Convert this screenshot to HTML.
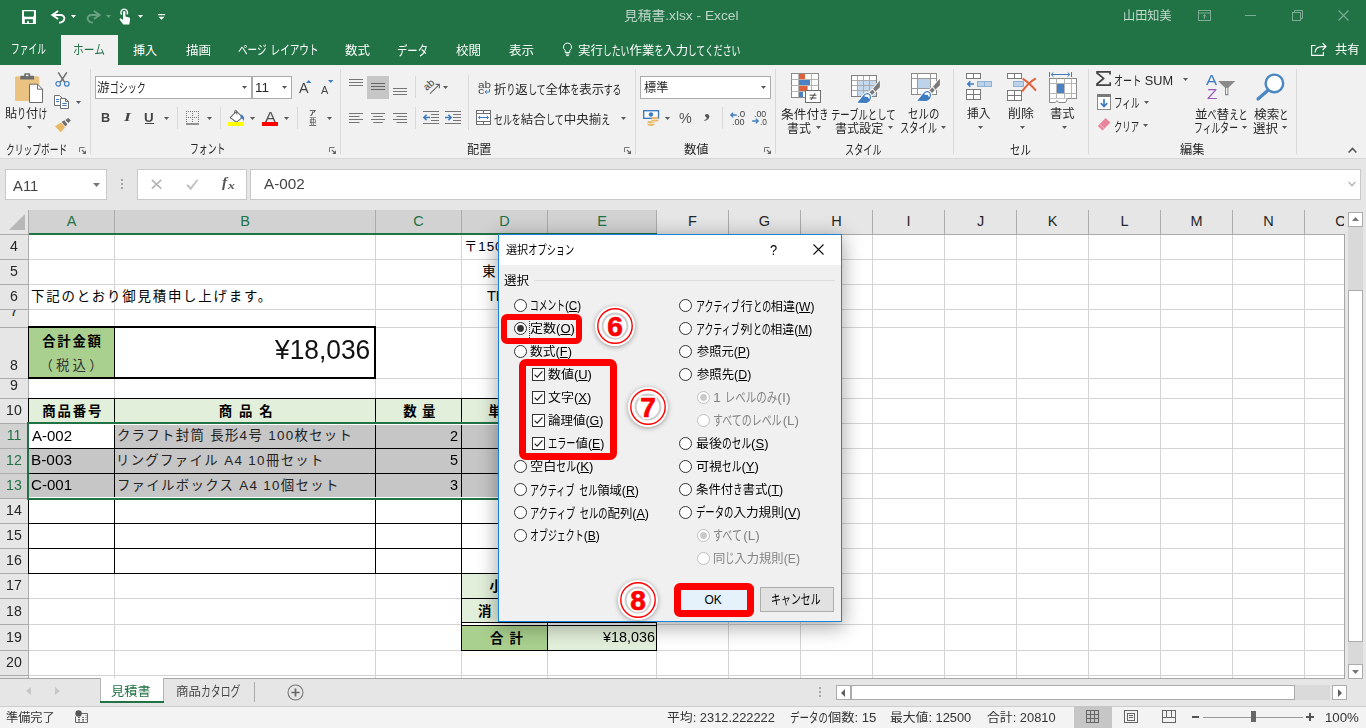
<!DOCTYPE html>
<html lang="ja"><head><meta charset="utf-8"><title>見積書.xlsx - Excel</title>
<style>

html,body{margin:0;padding:0}
body{width:1366px;height:728px;position:relative;overflow:hidden;background:#e6e6e6;font-family:"Liberation Sans","Noto Sans CJK JP",sans-serif;font-size:12px;color:#262626}
.a{position:absolute;box-sizing:border-box}
.t{position:absolute;white-space:nowrap;line-height:20px;height:20px;transform-origin:0 50%}
.t u{text-decoration:underline;text-underline-offset:1px}
svg{overflow:visible}

</style></head>
<body>
<div class="a" style="left:0px;top:0px;width:1366px;height:65px;background:#217346;"></div>
<svg class="a" style="left:22px;top:9.9px;" width="14" height="14" viewBox="0 0 14 14"><rect width="14" height="14" rx=".6" fill="#fff"/><path d="M2 1.2H11.9V6L11.1 6.8H2.8L2 6Z" fill="#217346"/><rect x="2.8" y="9.2" width="8.1" height="3.8" fill="#217346"/><rect x="5" y="11.2" width="2" height="1.8" fill="#fff"/></svg>
<svg class="a" style="left:50.8px;top:10px;" width="15" height="14" viewBox="0 0 15 14"><path d="M7.1 1L1.3 5L7.1 9" fill="none" stroke="#fff" stroke-width="1.9" stroke-linejoin="miter"/><path d="M1.8 5H9.4C14.8 5 15 11.8 8.2 12.8" fill="none" stroke="#fff" stroke-width="1.9"/></svg>
<svg class="a" style="left:71.0px;top:15.0px;" width="5" height="3" viewBox="0 0 5 3"><path d="M0 0H5L2.5 3Z" fill="#fff" opacity="1"/></svg>
<svg class="a" style="left:85.6px;top:10px;" width="15" height="14" viewBox="0 0 15 14"><g opacity=".33" transform="translate(15,0) scale(-1,1)"><path d="M7.1 1L1.3 5L7.1 9" fill="none" stroke="#fff" stroke-width="1.9" stroke-linejoin="miter"/><path d="M1.8 5H9.4C14.8 5 15 11.8 8.2 12.8" fill="none" stroke="#fff" stroke-width="1.9"/></g></svg>
<svg class="a" style="left:106.0px;top:15.0px;" width="5" height="3" viewBox="0 0 5 3"><path d="M0 0H5L2.5 3Z" fill="#fff" opacity="0.33"/></svg>
<svg class="a" style="left:118px;top:8px;" width="13" height="17" viewBox="0 0 13 17"><path d="M6.2 1.1A3.4 3.4 0 0 0 3.6 6.6" fill="none" stroke="#fff" stroke-width="1.4"/><path d="M6.2 1.1A3.4 3.4 0 0 1 8.9 6.4" fill="none" stroke="#fff" stroke-width="1.4"/><path d="M5 3.5Q6.2 2.4 7.4 3.5V8.6L11.2 9.6Q12.3 10 12.1 11.2L11.3 16.5H5.3L1.6 11.6Q1.3 10.4 2.5 10.3L5 12Z" fill="#fff"/></svg>
<svg class="a" style="left:138.0px;top:15.0px;" width="5" height="3" viewBox="0 0 5 3"><path d="M0 0H5L2.5 3Z" fill="#fff" opacity="1"/></svg>
<svg class="a" style="left:158px;top:14px;" width="7" height="6" viewBox="0 0 7 6"><rect x="0" y="0" width="7" height="1.2" fill="#fff"/><path d="M0.5 2.8H6.5L3.5 5.8Z" fill="#fff"/></svg>
<span class="t" style="left:624.24px;top:6.00px;font-size:13px;color:#bdd5c8;transform:scaleX(1.057);">見積書.xlsx  -  Excel</span>
<span class="t" style="left:1122.99px;top:6.00px;font-size:12px;color:#c5dbcf;transform:scaleX(1.011);">山田知美</span>
<svg class="a" style="left:1198px;top:10px;" width="13" height="11" viewBox="0 0 13 11"><rect x=".5" y=".5" width="12" height="10" fill="none" stroke="#7dad94"/><path d="M.5 3H12.5" stroke="#7dad94"/><path d="M6.5 8.8V4.8M4.6 6.6L6.5 4.8L8.4 6.6" fill="none" stroke="#7dad94"/></svg>
<svg class="a" style="left:1245px;top:15px;" width="11" height="1" viewBox="0 0 11 1"><rect width="11" height="1" fill="#7dad94"/></svg>
<svg class="a" style="left:1292px;top:10px;" width="11" height="11" viewBox="0 0 11 11"><path d="M2.5 2.5V.5H10.5V8.5H8.5" fill="none" stroke="#7dad94"/><rect x=".5" y="2.5" width="8" height="8" fill="none" stroke="#7dad94"/></svg>
<svg class="a" style="left:1338px;top:10px;" width="11" height="11" viewBox="0 0 11 11"><path d="M.5.5L10.5 10.5M10.5.5L.5 10.5" stroke="#7dad94" stroke-width="1.1"/></svg>
<div class="a" style="left:61px;top:35px;width:57px;height:30px;background:#f1f1f1;"></div>
<span class="t" style="left:10.98px;top:39.00px;font-size:12px;color:#fff;transform:scaleX(1.015);"><span style="display:inline-block;width:34.32px;font-size:13px;vertical-align:baseline"><span style="display:inline-block;transform:scaleX(0.66);transform-origin:0 50%">ファイル</span></span></span>
<span class="t" style="left:133.00px;top:41.00px;font-size:12px;color:#fff;transform:scaleX(1.000);">挿入</span>
<span class="t" style="left:186.00px;top:41.00px;font-size:12px;color:#fff;transform:scaleX(1.043);">描画</span>
<span class="t" style="left:237.88px;top:40.00px;font-size:12px;color:#fff;transform:scaleX(1.121);"><span style="display:inline-block;width:25.74px;font-size:13px;vertical-align:baseline"><span style="display:inline-block;transform:scaleX(0.66);transform-origin:0 50%">ページ</span></span> <span style="display:inline-block;width:42.9px;font-size:13px;vertical-align:baseline"><span style="display:inline-block;transform:scaleX(0.66);transform-origin:0 50%">レイアウト</span></span></span>
<span class="t" style="left:344.96px;top:41.00px;font-size:12px;color:#fff;transform:scaleX(1.043);">数式</span>
<span class="t" style="left:397.29px;top:41.00px;font-size:12px;color:#fff;transform:scaleX(1.208);"><span style="display:inline-block;width:25.74px;font-size:13px;vertical-align:baseline"><span style="display:inline-block;transform:scaleX(0.66);transform-origin:0 50%">データ</span></span></span>
<span class="t" style="left:456.00px;top:41.00px;font-size:12px;color:#fff;transform:scaleX(1.043);">校閲</span>
<span class="t" style="left:508.50px;top:41.00px;font-size:12px;color:#fff;transform:scaleX(1.043);">表示</span>
<span class="t" style="left:577.96px;top:41.00px;font-size:12px;color:#fff;transform:scaleX(1.035);">実行<span style="display:inline-block;width:25.74px;font-size:13px;vertical-align:baseline"><span style="display:inline-block;transform:scaleX(0.66);transform-origin:0 50%">したい</span></span>作業<span style="display:inline-block;width:8.58px;font-size:13px;vertical-align:baseline"><span style="display:inline-block;transform:scaleX(0.66);transform-origin:0 50%">を</span></span>入力<span style="display:inline-block;width:51.48px;font-size:13px;vertical-align:baseline"><span style="display:inline-block;transform:scaleX(0.66);transform-origin:0 50%">してください</span></span></span>
<span class="t" style="left:72.75px;top:40.00px;font-size:12px;color:#217346;transform:scaleX(1.250);"><span style="display:inline-block;width:25.74px;font-size:13px;vertical-align:baseline"><span style="display:inline-block;transform:scaleX(0.66);transform-origin:0 50%">ホーム</span></span></span>
<svg class="a" style="left:562px;top:42px;" width="11" height="15" viewBox="0 0 11 15"><path d="M5.5 1A4 4 0 0 0 3.2 8.3V10.4H7.8V8.3A4 4 0 0 0 5.5 1Z" fill="none" stroke="#fff" stroke-width="1"/><path d="M3.6 12H7.4M4.2 13.6H6.8" stroke="#fff" stroke-width="1"/></svg>
<svg class="a" style="left:1311px;top:42px;" width="16" height="14" viewBox="0 0 16 14"><path d="M4.5 3.5H.6V13.4H12.4V10" fill="none" stroke="#fff" stroke-width="1.1"/><path d="M4 10.5C4.5 6.6 7.5 4.6 11 4.6H14.6M11.6 1.2L15 4.6L11.6 8" fill="none" stroke="#fff" stroke-width="1.1"/></svg>
<span class="t" style="left:1334.50px;top:40.00px;font-size:12px;color:#fff;transform:scaleX(1.022);">共有</span>
<div class="a" style="left:0px;top:65px;width:1366px;height:93px;background:#f1f1f1;"></div>
<div class="a" style="left:0px;top:158px;width:1366px;height:1px;background:#d8d8d8;"></div>
<div class="a" style="left:90px;top:69px;width:1px;height:85px;background:#d9d9d9;"></div>
<div class="a" style="left:340px;top:69px;width:1px;height:85px;background:#d9d9d9;"></div>
<div class="a" style="left:635px;top:69px;width:1px;height:85px;background:#d9d9d9;"></div>
<div class="a" style="left:775px;top:69px;width:1px;height:85px;background:#d9d9d9;"></div>
<div class="a" style="left:953px;top:69px;width:1px;height:85px;background:#d9d9d9;"></div>
<div class="a" style="left:1088px;top:69px;width:1px;height:85px;background:#d9d9d9;"></div>
<div class="a" style="left:1296px;top:69px;width:1px;height:85px;background:#d9d9d9;"></div>
<div class="a" style="left:177px;top:107px;width:1px;height:22px;background:#d9d9d9;"></div>
<div class="a" style="left:220px;top:107px;width:1px;height:22px;background:#d9d9d9;"></div>
<div class="a" style="left:297px;top:107px;width:1px;height:22px;background:#d9d9d9;"></div>
<div class="a" style="left:415px;top:76px;width:1px;height:22px;background:#d9d9d9;"></div>
<div class="a" style="left:415px;top:107px;width:1px;height:22px;background:#d9d9d9;"></div>
<div class="a" style="left:468px;top:75px;width:1px;height:55px;background:#d9d9d9;"></div>
<div class="a" style="left:722px;top:107px;width:1px;height:22px;background:#d9d9d9;"></div>
<svg class="a" style="left:15px;top:73px;" width="28" height="30" viewBox="0 0 28 30"><rect x="0" y="3.2" width="24.2" height="24.8" rx="1.5" fill="#eac282"/><path d="M5.3 6.6V3.6Q5.3 2.7 6.2 2.7H9.2V1.2Q9.2.2 10.2.2H14.2Q15.2.2 15.2 1.2V2.7H18.2Q19.1 2.7 19.1 3.6V6.6Z" fill="#6d6d6d"/><rect x="11" y="1.6" width="2.4" height="1.6" fill="#f1f1f1"/><path d="M14.5 11.2H22.5L27.5 16.2V29.5H14.5Z" fill="#fff" stroke="#6d6d6d" stroke-width="1"/><path d="M22.5 11.2V16.2H27.5" fill="none" stroke="#6d6d6d" stroke-width="1"/></svg>
<span class="t" style="left:5.28px;top:104.00px;font-size:12px;color:#262626;transform:scaleX(1.018);">貼<span style="display:inline-block;width:8.58px;font-size:13px;vertical-align:baseline"><span style="display:inline-block;transform:scaleX(0.66);transform-origin:0 50%">り</span></span>付<span style="display:inline-block;width:8.58px;font-size:13px;vertical-align:baseline"><span style="display:inline-block;transform:scaleX(0.66);transform-origin:0 50%">け</span></span></span>
<svg class="a" style="left:26.9px;top:125.9px;" width="5" height="3" viewBox="0 0 5 3"><path d="M0 0H5L2.5 3Z" fill="#5a5a5a"/></svg>
<svg class="a" style="left:54.5px;top:71.5px;" width="15" height="15" viewBox="0 0 15 15"><path d="M3.2 0.3L9.6 10.2M11.8 0.3L5.4 10.2" stroke="#6d6d6d" stroke-width="1.5" fill="none"/><circle cx="3.2" cy="11.8" r="2.3" fill="none" stroke="#3e7cc1" stroke-width="1.2"/><circle cx="11.8" cy="11.8" r="2.3" fill="none" stroke="#3e7cc1" stroke-width="1.2"/></svg>
<svg class="a" style="left:54px;top:95px;" width="15" height="14" viewBox="0 0 15 14"><path d="M.5.5H5.5L8 3V10.5H.5Z" fill="#fff" stroke="#6d6d6d"/><path d="M6.5 3.5H11.5L14.5 6.5V13.5H6.5Z" fill="#fff" stroke="#6d6d6d"/><path d="M11.5 3.5V6.5H14.5" fill="none" stroke="#6d6d6d"/><path d="M2 4.5H5M2 6.5H5M8.3 8.5H12.7M8.3 10.5H12.7" stroke="#3e7cc1" stroke-width="1"/></svg>
<svg class="a" style="left:75.8px;top:101.0px;" width="5" height="3" viewBox="0 0 5 3"><path d="M0 0H5L2.5 3Z" fill="#5a5a5a"/></svg>
<svg class="a" style="left:54.5px;top:117.5px;" width="16" height="14.5" viewBox="0 0 16 14.5"><path d="M0 8.2L6.2 4.6L10 9.4L5.6 14.2Z" fill="#eab765"/><path d="M6.6 3.9L9.3 2.3L12.3 6.2L10.4 8.6Z" fill="#6d6d6d"/><path d="M10.4 1.9L13.4 0L15.9 2.5L13.3 5Z" fill="#6d6d6d"/></svg>
<span class="t" style="left:6.18px;top:140.00px;font-size:12px;color:#262626;transform:scaleX(1.019);"><span style="display:inline-block;width:60.06px;font-size:13px;vertical-align:baseline"><span style="display:inline-block;transform:scaleX(0.66);transform-origin:0 50%">クリップボード</span></span></span>
<svg class="a" style="left:79px;top:147px;" width="7" height="7" viewBox="0 0 7 7"><path d="M.5 5V.5H5.5" fill="none" stroke="#777" stroke-width="1"/><path d="M2.8 2.8L5.5 5.5" fill="none" stroke="#666" stroke-width="1.1"/><path d="M7 3.2V7H3.2Z" fill="#666"/></svg>
<div class="a" style="left:95px;top:76px;width:157px;height:23px;background:#fff;border:1px solid #ababab;"></div>
<div class="a" style="left:252px;top:76px;width:40px;height:23px;background:#fff;border:1px solid #ababab;"></div>
<span class="t" style="left:96.55px;top:78.00px;font-size:12px;color:#262626;transform:scaleX(1.055);">游<span style="display:inline-block;width:34.32px;font-size:13px;vertical-align:baseline"><span style="display:inline-block;transform:scaleX(0.66);transform-origin:0 50%">ゴシック</span></span></span>
<svg class="a" style="left:242.0px;top:86.0px;" width="5" height="3" viewBox="0 0 5 3"><path d="M0 0H5L2.5 3Z" fill="#5a5a5a"/></svg>
<span class="t" style="left:254.88px;top:78.00px;font-size:12px;color:#262626;transform:scaleX(1.118);">11</span>
<svg class="a" style="left:281.7px;top:86.0px;" width="5" height="3" viewBox="0 0 5 3"><path d="M0 0H5L2.5 3Z" fill="#5a5a5a"/></svg>
<span class="t" style="left:298.50px;top:78.00px;font-size:14px;color:#444;transform:scaleX(1.022);">A</span>
<svg class="a" style="left:306px;top:80px;" width="5.4" height="3" viewBox="0 0 5.4 3"><path d="M0 3L2.7 0L5.4 3Z" fill="#3e7cc1"/></svg>
<span class="t" style="left:321.00px;top:80.00px;font-size:11.5px;color:#444;transform:scaleX(0.950);">A</span>
<svg class="a" style="left:328px;top:80px;" width="5.4" height="3" viewBox="0 0 5.4 3"><path d="M0 0H5.4L2.7 3Z" fill="#3e7cc1"/></svg>
<span class="t" style="left:100.53px;top:108.00px;font-size:13px;color:#444;transform:scaleX(0.975);font-weight:700;">B</span>
<span class="t" style="left:124.20px;top:107.00px;font-size:13px;color:#444;transform:scaleX(1.360);font-weight:700;font-family:'Liberation Serif',serif;font-style:italic;">I</span>
<span class="t" style="left:144.47px;top:108.00px;font-size:13px;color:#444;transform:scaleX(1.025);font-weight:700;">U</span>
<div class="a" style="left:145px;top:123px;width:9px;height:1px;background:#444;"></div>
<svg class="a" style="left:163.9px;top:116.8px;" width="5" height="3" viewBox="0 0 5 3"><path d="M0 0H5L2.5 3Z" fill="#5a5a5a"/></svg>
<svg class="a" style="left:186px;top:110.5px;" width="13" height="14" viewBox="0 0 13 14"><rect x="0" y="0" width="1" height="1" fill="#777"/><rect x="2" y="0" width="1" height="1" fill="#777"/><rect x="4" y="0" width="1" height="1" fill="#777"/><rect x="6" y="0" width="1" height="1" fill="#777"/><rect x="8" y="0" width="1" height="1" fill="#777"/><rect x="10" y="0" width="1" height="1" fill="#777"/><rect x="12" y="0" width="1" height="1" fill="#777"/><rect x="0" y="6" width="1" height="1" fill="#777"/><rect x="2" y="6" width="1" height="1" fill="#777"/><rect x="4" y="6" width="1" height="1" fill="#777"/><rect x="6" y="6" width="1" height="1" fill="#777"/><rect x="8" y="6" width="1" height="1" fill="#777"/><rect x="10" y="6" width="1" height="1" fill="#777"/><rect x="12" y="6" width="1" height="1" fill="#777"/><rect x="0" y="0" width="1" height="1" fill="#777"/><rect x="0" y="2" width="1" height="1" fill="#777"/><rect x="0" y="4" width="1" height="1" fill="#777"/><rect x="0" y="6" width="1" height="1" fill="#777"/><rect x="0" y="8" width="1" height="1" fill="#777"/><rect x="0" y="10" width="1" height="1" fill="#777"/><rect x="6" y="0" width="1" height="1" fill="#777"/><rect x="6" y="2" width="1" height="1" fill="#777"/><rect x="6" y="4" width="1" height="1" fill="#777"/><rect x="6" y="6" width="1" height="1" fill="#777"/><rect x="6" y="8" width="1" height="1" fill="#777"/><rect x="6" y="10" width="1" height="1" fill="#777"/><rect x="12" y="0" width="1" height="1" fill="#777"/><rect x="12" y="2" width="1" height="1" fill="#777"/><rect x="12" y="4" width="1" height="1" fill="#777"/><rect x="12" y="6" width="1" height="1" fill="#777"/><rect x="12" y="8" width="1" height="1" fill="#777"/><rect x="12" y="10" width="1" height="1" fill="#777"/><rect x="0" y="12.4" width="13" height="1.2" fill="#555"/></svg>
<svg class="a" style="left:207.0px;top:116.8px;" width="5" height="3" viewBox="0 0 5 3"><path d="M0 0H5L2.5 3Z" fill="#5a5a5a"/></svg>
<svg class="a" style="left:229px;top:109.5px;" width="16" height="13" viewBox="0 0 16 13"><path d="M1.2 7.6L7.4 1.4L13.6 7.2L7.6 12.2Z" fill="#fff" stroke="#6a6a6a" stroke-width="1.1" stroke-linejoin="round"/><path d="M5.6 3.4V1.4Q5.6 .3 6.7 .3Q7.8 .3 7.8 1.4V4.6" fill="none" stroke="#6a6a6a" stroke-width="1"/><path d="M12.2 4.4Q16.2 6 14.8 11Q13.8 8.4 11.2 7.2Z" fill="#3e7cc1"/></svg>
<div class="a" style="left:228px;top:122px;width:16px;height:4px;background:#ffff00;"></div>
<svg class="a" style="left:250.0px;top:116.8px;" width="5" height="3" viewBox="0 0 5 3"><path d="M0 0H5L2.5 3Z" fill="#5a5a5a"/></svg>
<span class="t" style="left:265.30px;top:107.00px;font-size:14px;color:#555;transform:scaleX(1.156);">A</span>
<div class="a" style="left:262px;top:122px;width:16px;height:4px;background:#ff0000;"></div>
<svg class="a" style="left:284.0px;top:116.8px;" width="5" height="3" viewBox="0 0 5 3"><path d="M0 0H5L2.5 3Z" fill="#5a5a5a"/></svg>
<span class="t" style="left:308.97px;top:103.00px;font-size:7px;color:#444;transform:scaleX(1.033);font-weight:700;">ア</span>
<span class="t" style="left:308.70px;top:112.00px;font-size:9px;color:#444;transform:scaleX(0.833);">亜</span>
<svg class="a" style="left:327.1px;top:116.8px;" width="5" height="3" viewBox="0 0 5 3"><path d="M0 0H5L2.5 3Z" fill="#5a5a5a"/></svg>
<span class="t" style="left:189.97px;top:139.00px;font-size:12px;color:#262626;transform:scaleX(1.031);"><span style="display:inline-block;width:34.32px;font-size:13px;vertical-align:baseline"><span style="display:inline-block;transform:scaleX(0.66);transform-origin:0 50%">フォント</span></span></span>
<svg class="a" style="left:329px;top:147px;" width="7" height="7" viewBox="0 0 7 7"><path d="M.5 5V.5H5.5" fill="none" stroke="#777" stroke-width="1"/><path d="M2.8 2.8L5.5 5.5" fill="none" stroke="#666" stroke-width="1.1"/><path d="M7 3.2V7H3.2Z" fill="#666"/></svg>
<svg class="a" style="left:349px;top:79px;" width="14" height="7" viewBox="0 0 14 7"><rect x="0" y="0" width="14" height="1" fill="#767676"/><rect x="0" y="3" width="14" height="1" fill="#767676"/><rect x="0" y="6" width="14" height="1" fill="#767676"/></svg>
<div class="a" style="left:367px;top:76px;width:22px;height:23px;background:#c6c6c6;"></div>
<svg class="a" style="left:371px;top:83px;" width="14" height="7" viewBox="0 0 14 7"><rect x="0" y="0" width="14" height="1" fill="#666"/><rect x="0" y="3" width="14" height="1" fill="#666"/><rect x="0" y="6" width="14" height="1" fill="#666"/></svg>
<svg class="a" style="left:393px;top:88px;" width="14" height="7" viewBox="0 0 14 7"><rect x="0" y="0" width="14" height="1" fill="#767676"/><rect x="0" y="3" width="14" height="1" fill="#767676"/><rect x="0" y="6" width="14" height="1" fill="#767676"/></svg>
<svg class="a" style="left:349px;top:113px;" width="14" height="10" viewBox="0 0 14 10"><rect x="0" y="0" width="14" height="1" fill="#767676"/><rect x="0" y="3" width="10.5" height="1" fill="#767676"/><rect x="0" y="6" width="14" height="1" fill="#767676"/><rect x="0" y="9" width="10.5" height="1" fill="#767676"/></svg>
<svg class="a" style="left:371px;top:113px;" width="14" height="10" viewBox="0 0 14 10"><rect x="0" y="0" width="14" height="1" fill="#767676"/><rect x="2.2" y="3" width="9.600000000000001" height="1" fill="#767676"/><rect x="0" y="6" width="14" height="1" fill="#767676"/><rect x="2.2" y="9" width="9.600000000000001" height="1" fill="#767676"/></svg>
<svg class="a" style="left:393px;top:113px;" width="14" height="10" viewBox="0 0 14 10"><rect x="0" y="0" width="14" height="1" fill="#767676"/><rect x="3.5" y="3" width="10.5" height="1" fill="#767676"/><rect x="0" y="6" width="14" height="1" fill="#767676"/><rect x="3.5" y="9" width="10.5" height="1" fill="#767676"/></svg>
<svg class="a" style="left:422.5px;top:79px;" width="17" height="15" viewBox="0 0 17 15"><text x="0" y="0" font-size="10" fill="#444" font-family="Liberation Sans,sans-serif" transform="translate(3.8,12) rotate(-42)">ab</text><path d="M7 14.6L16.2 5.6M12.6 5.4H16.4V9.2" fill="none" stroke="#666" stroke-width="1.1"/></svg>
<svg class="a" style="left:443.0px;top:86.0px;" width="5" height="3" viewBox="0 0 5 3"><path d="M0 0H5L2.5 3Z" fill="#5a5a5a"/></svg>
<svg class="a" style="left:423px;top:111px;" width="16" height="13" viewBox="0 0 16 13"><rect x="0" y="0" width="16" height="1" fill="#767676"/><rect x="0" y="12" width="16" height="1" fill="#767676"/><rect x="8" y="3" width="8" height="1" fill="#767676"/><rect x="8" y="6" width="8" height="1" fill="#767676"/><rect x="8" y="9" width="8" height="1" fill="#767676"/><path d="M7 6.5H1M3.6 3.8L.9 6.5L3.6 9.2" fill="none" stroke="#3e7cc1" stroke-width="1.6"/></svg>
<svg class="a" style="left:445px;top:111px;" width="16" height="13" viewBox="0 0 16 13"><rect x="0" y="0" width="16" height="1" fill="#767676"/><rect x="0" y="12" width="16" height="1" fill="#767676"/><rect x="8" y="3" width="8" height="1" fill="#767676"/><rect x="8" y="6" width="8" height="1" fill="#767676"/><rect x="8" y="9" width="8" height="1" fill="#767676"/><path d="M0 6.5H6M3.4 3.8L6.1 6.5L3.4 9.2" fill="none" stroke="#3e7cc1" stroke-width="1.6"/></svg>
<span class="t" style="left:477.70px;top:75.00px;font-size:9.5px;color:#444;transform:scaleX(1.240);">ab</span>
<span class="t" style="left:478.00px;top:81.00px;font-size:9.5px;color:#444;transform:scaleX(1.350);">c</span>
<svg class="a" style="left:484px;top:88.5px;" width="6" height="5" viewBox="0 0 6 5"><path d="M5.5 0V3H1.2M2.8 1.2L1 3L2.8 4.8" fill="none" stroke="#3e7cc1" stroke-width="1"/></svg>
<span class="t" style="left:494.47px;top:80.00px;font-size:12px;color:#262626;transform:scaleX(1.035);">折<span style="display:inline-block;width:8.58px;font-size:13px;vertical-align:baseline"><span style="display:inline-block;transform:scaleX(0.66);transform-origin:0 50%">り</span></span>返<span style="display:inline-block;width:17.16px;font-size:13px;vertical-align:baseline"><span style="display:inline-block;transform:scaleX(0.66);transform-origin:0 50%">して</span></span>全体<span style="display:inline-block;width:8.58px;font-size:13px;vertical-align:baseline"><span style="display:inline-block;transform:scaleX(0.66);transform-origin:0 50%">を</span></span>表示<span style="display:inline-block;width:17.16px;font-size:13px;vertical-align:baseline"><span style="display:inline-block;transform:scaleX(0.66);transform-origin:0 50%">する</span></span></span>
<svg class="a" style="left:476px;top:110px;" width="15" height="15" viewBox="0 0 15 15"><rect x=".5" y=".5" width="14" height="14" fill="#fff" stroke="#6d6d6d"/><path d="M.5 3.5H14.5M.5 11.5H14.5M7.5 .5V3.5M7.5 11.5V14.5" stroke="#6d6d6d" fill="none"/><path d="M2.6 7.5H12.4M4.2 5.9L2.6 7.5L4.2 9.1M10.8 5.9L12.4 7.5L10.8 9.1" fill="none" stroke="#3e7cc1" stroke-width="1"/></svg>
<span class="t" style="left:494.46px;top:110.00px;font-size:12px;color:#262626;transform:scaleX(1.041);"><span style="display:inline-block;width:25.74px;font-size:13px;vertical-align:baseline"><span style="display:inline-block;transform:scaleX(0.66);transform-origin:0 50%">セルを</span></span>結合<span style="display:inline-block;width:17.16px;font-size:13px;vertical-align:baseline"><span style="display:inline-block;transform:scaleX(0.66);transform-origin:0 50%">して</span></span>中央揃<span style="display:inline-block;width:8.58px;font-size:13px;vertical-align:baseline"><span style="display:inline-block;transform:scaleX(0.66);transform-origin:0 50%">え</span></span></span>
<svg class="a" style="left:620.7px;top:116.8px;" width="5" height="3" viewBox="0 0 5 3"><path d="M0 0H5L2.5 3Z" fill="#5a5a5a"/></svg>
<span class="t" style="left:466.99px;top:140.00px;font-size:12px;color:#262626;transform:scaleX(1.013);">配置</span>
<svg class="a" style="left:623.7px;top:147px;" width="7" height="7" viewBox="0 0 7 7"><path d="M.5 5V.5H5.5" fill="none" stroke="#777" stroke-width="1"/><path d="M2.8 2.8L5.5 5.5" fill="none" stroke="#666" stroke-width="1.1"/><path d="M7 3.2V7H3.2Z" fill="#666"/></svg>
<div class="a" style="left:640px;top:76px;width:131px;height:23px;background:#fff;border:1px solid #ababab;"></div>
<span class="t" style="left:643.70px;top:78.00px;font-size:12px;color:#262626;transform:scaleX(1.013);">標準</span>
<svg class="a" style="left:760.9px;top:86.0px;" width="5" height="3" viewBox="0 0 5 3"><path d="M0 0H5L2.5 3Z" fill="#5a5a5a"/></svg>
<svg class="a" style="left:642.8px;top:110px;" width="17" height="16" viewBox="0 0 17 16"><rect x=".7" y=".7" width="14.8" height="7.6" fill="#fff" stroke="#3e7cc1" stroke-width="1.4"/><circle cx="8" cy="4.5" r="2.2" fill="#3e7cc1"/><ellipse cx="12" cy="8.2" rx="3.6" ry="1.4" fill="#eab765"/><ellipse cx="12" cy="10.6" rx="3.6" ry="1.4" fill="#eab765"/><ellipse cx="8" cy="12.4" rx="3.6" ry="1.4" fill="#eab765"/><ellipse cx="8" cy="14.6" rx="3.6" ry="1.4" fill="#eab765"/><path d="M8.4 9.4H15.6M8.4 11.8H15.6M4.4 13.5H11.6" stroke="#f1f1f1" stroke-width=".7"/></svg>
<svg class="a" style="left:665.0px;top:116.8px;" width="5" height="3" viewBox="0 0 5 3"><path d="M0 0H5L2.5 3Z" fill="#5a5a5a"/></svg>
<span class="t" style="left:679.30px;top:108.00px;font-size:14px;color:#555;transform:scaleX(1.025);">%</span>
<span class="t" style="left:703.80px;top:99.00px;font-size:24px;color:#555;transform:scaleX(1.040);font-weight:700;font-family:'Liberation Serif',serif;">,</span>
<span class="t" style="left:736.55px;top:104.00px;font-size:8.5px;color:#444;transform:scaleX(1.150);">.0</span>
<span class="t" style="left:731.84px;top:112.00px;font-size:8.5px;color:#444;transform:scaleX(1.064);">.00</span>
<svg class="a" style="left:730px;top:111.6px;" width="7" height="6" viewBox="0 0 7 6"><path d="M6.8 3H1M3.2 .6L.8 3L3.2 5.4" fill="none" stroke="#3e7cc1" stroke-width="1.3"/></svg>
<span class="t" style="left:753.96px;top:104.00px;font-size:8.5px;color:#444;transform:scaleX(1.036);">.00</span>
<span class="t" style="left:759.52px;top:112.00px;font-size:8.5px;color:#444;transform:scaleX(0.983);">.0</span>
<svg class="a" style="left:752px;top:118.4px;" width="7" height="6" viewBox="0 0 7 6"><path d="M.2 3H6M3.8 .6L6.2 3L3.8 5.4" fill="none" stroke="#3e7cc1" stroke-width="1.3"/></svg>
<span class="t" style="left:684.27px;top:140.00px;font-size:12px;color:#262626;transform:scaleX(1.030);">数値</span>
<svg class="a" style="left:764px;top:147px;" width="7" height="7" viewBox="0 0 7 7"><path d="M.5 5V.5H5.5" fill="none" stroke="#777" stroke-width="1"/><path d="M2.8 2.8L5.5 5.5" fill="none" stroke="#666" stroke-width="1.1"/><path d="M7 3.2V7H3.2Z" fill="#666"/></svg>
<svg class="a" style="left:791px;top:73px;" width="30" height="30" viewBox="0 0 30 30"><rect x=".5" y=".5" width="27" height="24" fill="#fff" stroke="#8a8a8a"/><path d="M.5 6.5H27.5M.5 12.5H27.5M.5 18.5H27.5M7.5 .5V24.5M20.5 .5V24.5" stroke="#b5b5b5" fill="none"/><rect x="8" y="1" width="6" height="5" fill="#e0623c"/><rect x="8" y="7" width="11" height="5" fill="#4b82c4"/><rect x="8" y="13" width="8.6" height="5" fill="#e0623c"/><rect x="8" y="19" width="4" height="5" fill="#4b82c4"/><rect x="14.5" y="17.5" width="15" height="12" fill="#fff" stroke="#6d6d6d"/><path d="M18.6 22.2H25.4M18.6 25H25.4M24 20.2L20 27" stroke="#444" stroke-width="1" fill="none"/></svg>
<span class="t" style="left:780.94px;top:105.00px;font-size:12px;color:#262626;transform:scaleX(1.060);">条件付<span style="display:inline-block;width:8.58px;font-size:13px;vertical-align:baseline"><span style="display:inline-block;transform:scaleX(0.66);transform-origin:0 50%">き</span></span></span>
<span class="t" style="left:787.21px;top:119.00px;font-size:12px;color:#262626;transform:scaleX(0.991);">書式</span>
<svg class="a" style="left:815.7px;top:125.9px;" width="5" height="3" viewBox="0 0 5 3"><path d="M0 0H5L2.5 3Z" fill="#5a5a5a"/></svg>
<svg class="a" style="left:851px;top:75px;" width="26" height="22" viewBox="0 0 26 22"><rect x=".5" y=".5" width="25" height="21" fill="#fff" stroke="#7f7f7f"/><rect x="7" y="6" width="18" height="15" fill="#c5d9ee"/><path d="M1 5.5H25M1 10.5H25M1 15.5H25M6.5 1V21M12.5 1V21M18.5 1V21" stroke="#ababab" fill="none"/></svg>
<svg class="a" style="left:857px;top:80px;" width="24" height="24" viewBox="0 0 24 24"><path d="M22.9 .6V7.3L18.2 11.8L16 8.8Z" fill="#7a7a7a" stroke="#f6f6f6" stroke-width="2" stroke-linejoin="round" paint-order="stroke"/><path d="M15.5 9.6L17.7 12.3L15 15L12.3 12.5Z" fill="#7a7a7a" stroke="#f6f6f6" stroke-width="2" stroke-linejoin="round" paint-order="stroke"/><path d="M.4 22.8L9.6 22.9Q13.6 21.4 14 17.4Q13.8 13.4 10.4 13Q7.6 13 6.2 15.6Z" fill="#3e7cc1" stroke="#f6f6f6" stroke-width="2" stroke-linejoin="round" paint-order="stroke"/><path d="M7.6 15.6Q9.6 13.6 12.2 14.8Q13.6 17 12.2 19.6L10.8 17L7.2 16.6Z" fill="#fff"/></svg>
<span class="t" style="left:831.21px;top:105.00px;font-size:12px;color:#262626;transform:scaleX(1.090);"><span style="display:inline-block;width:60.06px;font-size:13px;vertical-align:baseline"><span style="display:inline-block;transform:scaleX(0.66);transform-origin:0 50%">テーブルとして</span></span></span>
<span class="t" style="left:835.30px;top:119.00px;font-size:12px;color:#262626;transform:scaleX(1.004);">書式設定</span>
<svg class="a" style="left:887.9px;top:125.9px;" width="5" height="3" viewBox="0 0 5 3"><path d="M0 0H5L2.5 3Z" fill="#5a5a5a"/></svg>
<svg class="a" style="left:911px;top:73px;" width="26" height="22" viewBox="0 0 26 22"><rect x=".5" y=".5" width="25" height="21" fill="#fff" stroke="#8a8a8a"/><rect x="6" y="5" width="14" height="11" fill="#bdd3ea"/><path d="M.5 5.5H25.5M.5 15.5H25.5M6.5 .5V21.5M19.5 .5V21.5" stroke="#9a9a9a" fill="none"/></svg>
<svg class="a" style="left:917.3px;top:78px;" width="24" height="24" viewBox="0 0 24 24"><path d="M22.9 .6V7.3L18.2 11.8L16 8.8Z" fill="#7a7a7a" stroke="#f6f6f6" stroke-width="2" stroke-linejoin="round" paint-order="stroke"/><path d="M15.5 9.6L17.7 12.3L15 15L12.3 12.5Z" fill="#7a7a7a" stroke="#f6f6f6" stroke-width="2" stroke-linejoin="round" paint-order="stroke"/><path d="M.4 22.8L9.6 22.9Q13.6 21.4 14 17.4Q13.8 13.4 10.4 13Q7.6 13 6.2 15.6Z" fill="#3e7cc1" stroke="#f6f6f6" stroke-width="2" stroke-linejoin="round" paint-order="stroke"/><path d="M7.6 15.6Q9.6 13.6 12.2 14.8Q13.6 17 12.2 19.6L10.8 17L7.2 16.6Z" fill="#fff"/></svg>
<span class="t" style="left:908.18px;top:104.00px;font-size:12px;color:#262626;transform:scaleX(1.217);"><span style="display:inline-block;width:25.74px;font-size:13px;vertical-align:baseline"><span style="display:inline-block;transform:scaleX(0.66);transform-origin:0 50%">セルの</span></span></span>
<span class="t" style="left:899.72px;top:118.00px;font-size:12px;color:#262626;transform:scaleX(1.076);"><span style="display:inline-block;width:34.32px;font-size:13px;vertical-align:baseline"><span style="display:inline-block;transform:scaleX(0.66);transform-origin:0 50%">スタイル</span></span></span>
<svg class="a" style="left:940.8px;top:125.9px;" width="5" height="3" viewBox="0 0 5 3"><path d="M0 0H5L2.5 3Z" fill="#5a5a5a"/></svg>
<span class="t" style="left:845.14px;top:140.00px;font-size:12px;color:#262626;transform:scaleX(1.064);"><span style="display:inline-block;width:34.32px;font-size:13px;vertical-align:baseline"><span style="display:inline-block;transform:scaleX(0.66);transform-origin:0 50%">スタイル</span></span></span>
<svg class="a" style="left:966px;top:73px;" width="27" height="28" viewBox="0 0 27 28"><rect x="0.5" y="0.5" width="7" height="5" fill="#fff" stroke="#7a7a7a"/><rect x="7.5" y="0.5" width="7" height="5" fill="#fff" stroke="#7a7a7a"/><rect x="11.5" y="8.5" width="7" height="5" fill="#bdd3ea" stroke="#8fb0d6"/><rect x="18.5" y="8.5" width="7" height="5" fill="#bdd3ea" stroke="#8fb0d6"/><path d="M8 11H2M4.4 8.4L1.8 11L4.4 13.6" fill="none" stroke="#3e7cc1" stroke-width="1.6"/><rect x="0.5" y="16.5" width="7" height="5" fill="#fff" stroke="#7a7a7a"/><rect x="7.5" y="16.5" width="7" height="5" fill="#fff" stroke="#7a7a7a"/><rect x="0.5" y="21.5" width="7" height="5" fill="#fff" stroke="#7a7a7a"/><rect x="7.5" y="21.5" width="7" height="5" fill="#fff" stroke="#7a7a7a"/></svg>
<span class="t" style="left:967.00px;top:104.00px;font-size:12px;color:#262626;transform:scaleX(0.971);">挿入</span>
<svg class="a" style="left:977.9px;top:125.9px;" width="5" height="3" viewBox="0 0 5 3"><path d="M0 0H5L2.5 3Z" fill="#5a5a5a"/></svg>
<svg class="a" style="left:1007px;top:73px;" width="30" height="28" viewBox="0 0 30 28"><rect x="0.5" y="0.5" width="7" height="5" fill="#fff" stroke="#7a7a7a"/><rect x="7.5" y="0.5" width="7" height="5" fill="#fff" stroke="#7a7a7a"/><rect x="6.5" y="8.5" width="10" height="5" fill="#bdd3ea" stroke="#8fb0d6"/><rect x="0.5" y="17.5" width="7" height="5" fill="#fff" stroke="#7a7a7a"/><rect x="7.5" y="17.5" width="7" height="5" fill="#fff" stroke="#7a7a7a"/><rect x="0.5" y="22.5" width="7" height="5" fill="#fff" stroke="#7a7a7a"/><rect x="7.5" y="22.5" width="7" height="5" fill="#fff" stroke="#7a7a7a"/><path d="M15.6 5.6Q22 9.6 29 17.6M28.8 5.4Q21 10 15.2 18.4" fill="none" stroke="#e0623c" stroke-width="2"/></svg>
<span class="t" style="left:1008.22px;top:104.00px;font-size:12px;color:#262626;transform:scaleX(1.077);">削除</span>
<svg class="a" style="left:1019.5px;top:125.9px;" width="5" height="3" viewBox="0 0 5 3"><path d="M0 0H5L2.5 3Z" fill="#5a5a5a"/></svg>
<svg class="a" style="left:1049px;top:72px;" width="29" height="31" viewBox="0 0 29 31"><path d="M.5 0V5M22.5 0V5M2 2.5H21M4.4 .4L2.2 2.5L4.4 4.6M18.6 .4L20.8 2.5L18.6 4.6" fill="none" stroke="#3e7cc1" stroke-width="1"/><rect x=".5" y="6.5" width="27" height="20" fill="#fff" stroke="#8a8a8a"/><path d="M.5 11.5H27.5M.5 21.5H27.5M7.5 6.5V26.5M15.5 6.5V26.5M22.5 6.5V26.5" stroke="#b5b5b5" fill="none"/><rect x="8" y="12" width="7" height="9" fill="#4b82c4"/><path d="M.5 26.5V30.5H6.5L8 28.5L9.5 30.5H16.5L18.5 26.5" fill="#fff" stroke="#8a8a8a"/></svg>
<span class="t" style="left:1050.18px;top:104.00px;font-size:12px;color:#262626;transform:scaleX(1.022);">書式</span>
<svg class="a" style="left:1061.8px;top:125.9px;" width="5" height="3" viewBox="0 0 5 3"><path d="M0 0H5L2.5 3Z" fill="#5a5a5a"/></svg>
<span class="t" style="left:1010.09px;top:140.00px;font-size:12px;color:#262626;transform:scaleX(1.213);"><span style="display:inline-block;width:17.16px;font-size:13px;vertical-align:baseline"><span style="display:inline-block;transform:scaleX(0.66);transform-origin:0 50%">セル</span></span></span>
<svg class="a" style="left:1096px;top:71px;" width="15" height="15" viewBox="0 0 15 15"><path d="M14 3.6V.8H1V2L7.6 7.4L1 13V14.2H14.2V11.2" fill="none" stroke="#444" stroke-width="1.7"/></svg>
<span class="t" style="left:1114.24px;top:71.00px;font-size:12px;color:#262626;transform:scaleX(1.061);"><span style="display:inline-block;width:25.74px;font-size:13px;vertical-align:baseline"><span style="display:inline-block;transform:scaleX(0.66);transform-origin:0 50%">オート</span></span> SUM</span>
<svg class="a" style="left:1182.9px;top:78.3px;" width="5" height="3" viewBox="0 0 5 3"><path d="M0 0H5L2.5 3Z" fill="#5a5a5a"/></svg>
<svg class="a" style="left:1097px;top:94px;" width="14" height="16" viewBox="0 0 14 16"><rect x=".5" y=".5" width="13" height="15" fill="#fff" stroke="#8a8a8a"/><rect x="0" y="0" width="14" height="3" fill="#7a7a7a"/><path d="M7 5V12.4M3.8 9.2L7 12.6L10.2 9.2" fill="none" stroke="#3e7cc1" stroke-width="1.7"/></svg>
<span class="t" style="left:1114.30px;top:93.00px;font-size:12px;color:#262626;transform:scaleX(0.996);"><span style="display:inline-block;width:25.74px;font-size:13px;vertical-align:baseline"><span style="display:inline-block;transform:scaleX(0.66);transform-origin:0 50%">フィル</span></span></span>
<svg class="a" style="left:1144.1px;top:101.0px;" width="5" height="3" viewBox="0 0 5 3"><path d="M0 0H5L2.5 3Z" fill="#5a5a5a"/></svg>
<svg class="a" style="left:1097px;top:118px;" width="14" height="13" viewBox="0 0 14 13"><path d="M8.6 0L13.4 4.4L5.6 12.4L.8 8Z" fill="#e8849b"/><path d="M2.6 6.2L7.4 10.6" stroke="#f6c5cf" stroke-width="1"/></svg>
<span class="t" style="left:1114.33px;top:117.00px;font-size:12px;color:#262626;transform:scaleX(0.975);"><span style="display:inline-block;width:25.74px;font-size:13px;vertical-align:baseline"><span style="display:inline-block;transform:scaleX(0.66);transform-origin:0 50%">クリア</span></span></span>
<svg class="a" style="left:1143.1px;top:123.8px;" width="5" height="3" viewBox="0 0 5 3"><path d="M0 0H5L2.5 3Z" fill="#5a5a5a"/></svg>
<span class="t" style="left:1206.20px;top:70.00px;font-size:15px;color:#3e7cc1;transform:scaleX(1.110);">A</span>
<span class="t" style="left:1206.80px;top:84.00px;font-size:15px;color:#9b59b6;transform:scaleX(1.122);">Z</span>
<svg class="a" style="left:1218px;top:81px;" width="17.5" height="14.5" viewBox="0 0 17.5 14.5"><path d="M0 0H17.2L10.4 6.8V14.2H7V6.8Z" fill="#8a8a8a"/><rect x="8" y="7" width="1.4" height="6" fill="#f1f1f1"/></svg>
<span class="t" style="left:1195.45px;top:105.00px;font-size:12px;color:#262626;transform:scaleX(1.048);">並<span style="display:inline-block;width:8.58px;font-size:13px;vertical-align:baseline"><span style="display:inline-block;transform:scaleX(0.66);transform-origin:0 50%">べ</span></span>替<span style="display:inline-block;width:17.16px;font-size:13px;vertical-align:baseline"><span style="display:inline-block;transform:scaleX(0.66);transform-origin:0 50%">えと</span></span></span>
<span class="t" style="left:1193.97px;top:118.00px;font-size:12px;color:#262626;transform:scaleX(1.029);"><span style="display:inline-block;width:42.9px;font-size:13px;vertical-align:baseline"><span style="display:inline-block;transform:scaleX(0.66);transform-origin:0 50%">フィルター</span></span></span>
<svg class="a" style="left:1241.7px;top:126.1px;" width="5" height="3" viewBox="0 0 5 3"><path d="M0 0H5L2.5 3Z" fill="#5a5a5a"/></svg>
<svg class="a" style="left:1256px;top:72px;" width="30" height="29" viewBox="0 0 30 29"><circle cx="18.4" cy="11.4" r="8.8" fill="#fff" stroke="#4a86c5" stroke-width="2.4"/><path d="M12 18.2L2 27" stroke="#4a86c5" stroke-width="3.2" stroke-linecap="round"/></svg>
<span class="t" style="left:1254.24px;top:105.00px;font-size:12px;color:#262626;transform:scaleX(1.057);">検索<span style="display:inline-block;width:8.58px;font-size:13px;vertical-align:baseline"><span style="display:inline-block;transform:scaleX(0.66);transform-origin:0 50%">と</span></span></span>
<span class="t" style="left:1253.17px;top:119.00px;font-size:12px;color:#262626;transform:scaleX(1.035);">選択</span>
<svg class="a" style="left:1281.9px;top:126.1px;" width="5" height="3" viewBox="0 0 5 3"><path d="M0 0H5L2.5 3Z" fill="#5a5a5a"/></svg>
<span class="t" style="left:1180.30px;top:140.00px;font-size:12px;color:#262626;transform:scaleX(1.017);">編集</span>
<svg class="a" style="left:1347.5px;top:146.5px;" width="9" height="6" viewBox="0 0 9 6"><path d="M.6 5.4L4.5 1.4L8.4 5.4" fill="none" stroke="#555" stroke-width="1.5"/></svg>
<div class="a" style="left:5px;top:169px;width:102px;height:31px;background:#fff;border:1px solid #c8c8c8;"></div>
<span class="t" style="left:12.80px;top:176.00px;font-size:14.67px;color:#444;transform:scaleX(1.012);">A11</span>
<svg class="a" style="left:93px;top:182.5px;" width="7" height="4" viewBox="0 0 7 4"><path d="M0 0H7L3.5 4Z" fill="#777"/></svg>
<div class="a" style="left:121px;top:179.3px;width:2px;height:1.8px;background:#a6a6a6;"></div>
<div class="a" style="left:121px;top:183.3px;width:2px;height:1.8px;background:#a6a6a6;"></div>
<div class="a" style="left:121px;top:187.3px;width:2px;height:1.8px;background:#a6a6a6;"></div>
<div class="a" style="left:137px;top:169px;width:110px;height:31px;background:#fff;border:1px solid #c8c8c8;"></div>
<svg class="a" style="left:150.5px;top:179px;" width="11" height="10.4" viewBox="0 0 11 10.4"><path d="M.8.8L10.2 9.6M10.2.8L.8 9.6" stroke="#b4b4b4" stroke-width="1.6"/></svg>
<svg class="a" style="left:186.4px;top:178.7px;" width="12.4" height="11.3" viewBox="0 0 12.4 11.3"><path d="M.3 6.6L1.9 5.2L4.7 8.1L11 .2L12.3 1.3L4.9 11.2Z" fill="#c2c2c2"/></svg>
<span class="t" style="left:222.20px;top:172.00px;font-size:15px;color:#555;transform:scaleX(1.033);font-weight:700;font-family:'Liberation Serif',serif;font-style:italic;">f</span>
<span class="t" style="left:228.00px;top:175.00px;font-size:11px;color:#555;transform:scaleX(1.240);font-weight:700;font-family:'Liberation Serif',serif;font-style:italic;">x</span>
<div class="a" style="left:250px;top:169px;width:1111px;height:31px;background:#fff;border:1px solid #c8c8c8;"></div>
<span class="t" style="left:264.00px;top:174.00px;font-size:14.5px;color:#444;transform:scaleX(1.053);">A-002</span>
<svg class="a" style="left:1348px;top:181px;" width="8" height="6" viewBox="0 0 8 6"><path d="M.7 1L4 4.6L7.3 1" fill="none" stroke="#b5b5b5" stroke-width="1.4"/></svg>
<div class="a" style="left:29px;top:235px;width:1316px;height:443px;background:#fff;"></div>
<div class="a" style="left:0px;top:210px;width:1345px;height:25px;background:#e6e6e6;"></div>
<div class="a" style="left:29px;top:210px;width:628px;height:24px;background:#d2d2d2;"></div>
<div class="a" style="left:0px;top:235px;width:28px;height:444px;background:#e6e6e6;"></div>
<div class="a" style="left:0px;top:424px;width:28px;height:75px;background:#d2d2d2;"></div>
<svg class="a" style="left:9px;top:214px;" width="16" height="16" viewBox="0 0 16 16"><path d="M16 0V16H0Z" fill="#b7b7b7"/></svg>
<span class="t" style="left:61.50px;top:211.00px;font-size:14.5px;color:#217346;width:20px;text-align:center;">A</span>
<span class="t" style="left:235.00px;top:211.00px;font-size:14.5px;color:#217346;width:20px;text-align:center;">B</span>
<span class="t" style="left:408.50px;top:211.00px;font-size:14.5px;color:#217346;width:20px;text-align:center;">C</span>
<span class="t" style="left:494.50px;top:211.00px;font-size:14.5px;color:#217346;width:20px;text-align:center;">D</span>
<span class="t" style="left:592.00px;top:211.00px;font-size:14.5px;color:#217346;width:20px;text-align:center;">E</span>
<span class="t" style="left:682.50px;top:211.00px;font-size:14.5px;color:#262626;width:20px;text-align:center;">F</span>
<span class="t" style="left:754.50px;top:211.00px;font-size:14.5px;color:#262626;width:20px;text-align:center;">G</span>
<span class="t" style="left:826.50px;top:211.00px;font-size:14.5px;color:#262626;width:20px;text-align:center;">H</span>
<span class="t" style="left:898.50px;top:211.00px;font-size:14.5px;color:#262626;width:20px;text-align:center;">I</span>
<span class="t" style="left:970.50px;top:211.00px;font-size:14.5px;color:#262626;width:20px;text-align:center;">J</span>
<span class="t" style="left:1042.50px;top:211.00px;font-size:14.5px;color:#262626;width:20px;text-align:center;">K</span>
<span class="t" style="left:1114.50px;top:211.00px;font-size:14.5px;color:#262626;width:20px;text-align:center;">L</span>
<span class="t" style="left:1186.50px;top:211.00px;font-size:14.5px;color:#262626;width:20px;text-align:center;">M</span>
<span class="t" style="left:1258.50px;top:211.00px;font-size:14.5px;color:#262626;width:20px;text-align:center;">N</span>
<div class="a" style="left:1305px;top:210px;width:39px;height:23px;overflow:hidden;"><span class="t" style="left:30.2px;top:1px;font-size:14.5px;color:#262626">O</span></div>
<div class="a" style="left:28px;top:210px;width:1px;height:25px;background:#ababab;"></div>
<div class="a" style="left:114px;top:210px;width:1px;height:25px;background:#ababab;"></div>
<div class="a" style="left:375px;top:210px;width:1px;height:25px;background:#ababab;"></div>
<div class="a" style="left:461px;top:210px;width:1px;height:25px;background:#ababab;"></div>
<div class="a" style="left:547px;top:210px;width:1px;height:25px;background:#ababab;"></div>
<div class="a" style="left:656px;top:210px;width:1px;height:25px;background:#ababab;"></div>
<div class="a" style="left:728px;top:210px;width:1px;height:25px;background:#ababab;"></div>
<div class="a" style="left:800px;top:210px;width:1px;height:25px;background:#ababab;"></div>
<div class="a" style="left:872px;top:210px;width:1px;height:25px;background:#ababab;"></div>
<div class="a" style="left:944px;top:210px;width:1px;height:25px;background:#ababab;"></div>
<div class="a" style="left:1016px;top:210px;width:1px;height:25px;background:#ababab;"></div>
<div class="a" style="left:1088px;top:210px;width:1px;height:25px;background:#ababab;"></div>
<div class="a" style="left:1160px;top:210px;width:1px;height:25px;background:#ababab;"></div>
<div class="a" style="left:1232px;top:210px;width:1px;height:25px;background:#ababab;"></div>
<div class="a" style="left:1304px;top:210px;width:1px;height:25px;background:#ababab;"></div>
<div class="a" style="left:0px;top:234px;width:1345px;height:1px;background:#ababab;"></div>
<div class="a" style="left:29px;top:233px;width:628px;height:2px;background:#217346;"></div>
<div class="a" style="left:28px;top:235px;width:1px;height:443px;background:#ababab;"></div>
<div class="a" style="left:0px;top:259px;width:28px;height:1px;background:#ababab;"></div>
<span class="t" style="left:0.40px;top:236.00px;font-size:15.4px;color:#262626;width:28px;text-align:center;transform:scaleX(.92);transform-origin:50% 50%;">4</span>
<div class="a" style="left:0px;top:284px;width:28px;height:1px;background:#ababab;"></div>
<span class="t" style="left:0.40px;top:261.00px;font-size:15.4px;color:#262626;width:28px;text-align:center;transform:scaleX(.92);transform-origin:50% 50%;">5</span>
<div class="a" style="left:0px;top:309px;width:28px;height:1px;background:#ababab;"></div>
<span class="t" style="left:0.40px;top:286.00px;font-size:15.4px;color:#262626;width:28px;text-align:center;transform:scaleX(.92);transform-origin:50% 50%;">6</span>
<div class="a" style="left:0px;top:327px;width:28px;height:1px;background:#ababab;"></div>
<div class="a" style="left:0px;top:310px;width:28px;height:17px;overflow:hidden;"><span class="t" style="left:0;width:28px;text-align:center;top:-9px;font-size:15.4px;color:#262626">7</span></div>
<div class="a" style="left:0px;top:378px;width:28px;height:1px;background:#ababab;"></div>
<span class="t" style="left:0.40px;top:355.00px;font-size:15.4px;color:#262626;width:28px;text-align:center;transform:scaleX(.92);transform-origin:50% 50%;">8</span>
<div class="a" style="left:0px;top:398px;width:28px;height:1px;background:#ababab;"></div>
<span class="t" style="left:0.40px;top:375.00px;font-size:15.4px;color:#262626;width:28px;text-align:center;transform:scaleX(.92);transform-origin:50% 50%;">9</span>
<div class="a" style="left:0px;top:423px;width:28px;height:1px;background:#ababab;"></div>
<span class="t" style="left:0.40px;top:400.00px;font-size:15.4px;color:#262626;width:28px;text-align:center;transform:scaleX(.92);transform-origin:50% 50%;">10</span>
<div class="a" style="left:0px;top:448px;width:28px;height:1px;background:#ababab;"></div>
<span class="t" style="left:0.40px;top:425.00px;font-size:15.4px;color:#217346;width:28px;text-align:center;transform:scaleX(.92);transform-origin:50% 50%;">11</span>
<div class="a" style="left:0px;top:473px;width:28px;height:1px;background:#ababab;"></div>
<span class="t" style="left:0.40px;top:450.00px;font-size:15.4px;color:#217346;width:28px;text-align:center;transform:scaleX(.92);transform-origin:50% 50%;">12</span>
<div class="a" style="left:0px;top:498px;width:28px;height:1px;background:#ababab;"></div>
<span class="t" style="left:0.40px;top:475.00px;font-size:15.4px;color:#217346;width:28px;text-align:center;transform:scaleX(.92);transform-origin:50% 50%;">13</span>
<div class="a" style="left:0px;top:523px;width:28px;height:1px;background:#ababab;"></div>
<span class="t" style="left:0.40px;top:500.00px;font-size:15.4px;color:#262626;width:28px;text-align:center;transform:scaleX(.92);transform-origin:50% 50%;">14</span>
<div class="a" style="left:0px;top:548px;width:28px;height:1px;background:#ababab;"></div>
<span class="t" style="left:0.40px;top:525.00px;font-size:15.4px;color:#262626;width:28px;text-align:center;transform:scaleX(.92);transform-origin:50% 50%;">15</span>
<div class="a" style="left:0px;top:573px;width:28px;height:1px;background:#ababab;"></div>
<span class="t" style="left:0.40px;top:550.00px;font-size:15.4px;color:#262626;width:28px;text-align:center;transform:scaleX(.92);transform-origin:50% 50%;">16</span>
<div class="a" style="left:0px;top:598px;width:28px;height:1px;background:#ababab;"></div>
<span class="t" style="left:0.40px;top:575.00px;font-size:15.4px;color:#262626;width:28px;text-align:center;transform:scaleX(.92);transform-origin:50% 50%;">17</span>
<div class="a" style="left:0px;top:624px;width:28px;height:1px;background:#ababab;"></div>
<span class="t" style="left:0.40px;top:601.00px;font-size:15.4px;color:#262626;width:28px;text-align:center;transform:scaleX(.92);transform-origin:50% 50%;">18</span>
<div class="a" style="left:0px;top:650px;width:28px;height:1px;background:#ababab;"></div>
<span class="t" style="left:0.40px;top:627.00px;font-size:15.4px;color:#262626;width:28px;text-align:center;transform:scaleX(.92);transform-origin:50% 50%;">19</span>
<div class="a" style="left:0px;top:675px;width:28px;height:1px;background:#ababab;"></div>
<span class="t" style="left:0.40px;top:652.00px;font-size:15.4px;color:#262626;width:28px;text-align:center;transform:scaleX(.92);transform-origin:50% 50%;">20</span>
<div class="a" style="left:27px;top:424px;width:1px;height:74px;background:#217346;"></div>
<div class="a" style="left:29px;top:259px;width:1315px;height:1px;background:#d4d4d4;"></div>
<div class="a" style="left:29px;top:284px;width:1315px;height:1px;background:#d4d4d4;"></div>
<div class="a" style="left:29px;top:309px;width:1315px;height:1px;background:#d4d4d4;"></div>
<div class="a" style="left:29px;top:327px;width:1315px;height:1px;background:#d4d4d4;"></div>
<div class="a" style="left:29px;top:378px;width:1315px;height:1px;background:#d4d4d4;"></div>
<div class="a" style="left:29px;top:398px;width:1315px;height:1px;background:#d4d4d4;"></div>
<div class="a" style="left:29px;top:423px;width:1315px;height:1px;background:#d4d4d4;"></div>
<div class="a" style="left:29px;top:448px;width:1315px;height:1px;background:#d4d4d4;"></div>
<div class="a" style="left:29px;top:473px;width:1315px;height:1px;background:#d4d4d4;"></div>
<div class="a" style="left:29px;top:498px;width:1315px;height:1px;background:#d4d4d4;"></div>
<div class="a" style="left:29px;top:523px;width:1315px;height:1px;background:#d4d4d4;"></div>
<div class="a" style="left:29px;top:548px;width:1315px;height:1px;background:#d4d4d4;"></div>
<div class="a" style="left:29px;top:573px;width:1315px;height:1px;background:#d4d4d4;"></div>
<div class="a" style="left:29px;top:598px;width:1315px;height:1px;background:#d4d4d4;"></div>
<div class="a" style="left:29px;top:624px;width:1315px;height:1px;background:#d4d4d4;"></div>
<div class="a" style="left:29px;top:650px;width:1315px;height:1px;background:#d4d4d4;"></div>
<div class="a" style="left:29px;top:675px;width:1315px;height:1px;background:#d4d4d4;"></div>
<div class="a" style="left:114px;top:235px;width:1px;height:443px;background:#d4d4d4;"></div>
<div class="a" style="left:375px;top:235px;width:1px;height:443px;background:#d4d4d4;"></div>
<div class="a" style="left:461px;top:235px;width:1px;height:443px;background:#d4d4d4;"></div>
<div class="a" style="left:547px;top:235px;width:1px;height:443px;background:#d4d4d4;"></div>
<div class="a" style="left:656px;top:235px;width:1px;height:443px;background:#d4d4d4;"></div>
<div class="a" style="left:728px;top:235px;width:1px;height:443px;background:#d4d4d4;"></div>
<div class="a" style="left:800px;top:235px;width:1px;height:443px;background:#d4d4d4;"></div>
<div class="a" style="left:872px;top:235px;width:1px;height:443px;background:#d4d4d4;"></div>
<div class="a" style="left:944px;top:235px;width:1px;height:443px;background:#d4d4d4;"></div>
<div class="a" style="left:1016px;top:235px;width:1px;height:443px;background:#d4d4d4;"></div>
<div class="a" style="left:1088px;top:235px;width:1px;height:443px;background:#d4d4d4;"></div>
<div class="a" style="left:1160px;top:235px;width:1px;height:443px;background:#d4d4d4;"></div>
<div class="a" style="left:1232px;top:235px;width:1px;height:443px;background:#d4d4d4;"></div>
<div class="a" style="left:1304px;top:235px;width:1px;height:443px;background:#d4d4d4;"></div>
<div class="a" style="left:1344px;top:234px;width:1px;height:445px;background:#a6a6a6;"></div>
<div class="a" style="left:29px;top:328px;width:85px;height:49px;background:#a9d08e;"></div>
<div class="a" style="left:29px;top:399px;width:628px;height:24px;background:#e2efda;"></div>
<div class="a" style="left:29px;top:424px;width:628px;height:74px;background:#c6c6c6;"></div>
<div class="a" style="left:29px;top:424px;width:85px;height:24px;background:#fff;"></div>
<div class="a" style="left:462px;top:574px;width:195px;height:24px;background:#e2efda;"></div>
<div class="a" style="left:462px;top:599px;width:195px;height:23px;background:#e2efda;"></div>
<div class="a" style="left:462px;top:626px;width:85px;height:24px;background:#a9d08e;"></div>
<div class="a" style="left:548px;top:626px;width:108px;height:24px;background:#e2efda;"></div>
<div class="a" style="left:28px;top:326px;width:348px;height:2px;background:#000;"></div>
<div class="a" style="left:28px;top:377px;width:348px;height:2px;background:#000;"></div>
<div class="a" style="left:28px;top:326px;width:1px;height:53px;background:#000;"></div>
<div class="a" style="left:374px;top:326px;width:2px;height:53px;background:#000;"></div>
<div class="a" style="left:114px;top:328px;width:1px;height:49px;background:#000;"></div>
<div class="a" style="left:28px;top:398px;width:629px;height:1px;background:#000;"></div>
<div class="a" style="left:28px;top:423px;width:629px;height:1px;background:#000;"></div>
<div class="a" style="left:28px;top:448px;width:629px;height:1px;background:#000;"></div>
<div class="a" style="left:28px;top:473px;width:629px;height:1px;background:#000;"></div>
<div class="a" style="left:28px;top:498px;width:629px;height:1px;background:#000;"></div>
<div class="a" style="left:28px;top:523px;width:629px;height:1px;background:#000;"></div>
<div class="a" style="left:28px;top:548px;width:629px;height:1px;background:#000;"></div>
<div class="a" style="left:28px;top:573px;width:629px;height:1px;background:#000;"></div>
<div class="a" style="left:28px;top:398px;width:1px;height:176px;background:#000;"></div>
<div class="a" style="left:114px;top:398px;width:1px;height:176px;background:#000;"></div>
<div class="a" style="left:375px;top:398px;width:1px;height:176px;background:#000;"></div>
<div class="a" style="left:461px;top:398px;width:1px;height:176px;background:#000;"></div>
<div class="a" style="left:547px;top:398px;width:1px;height:176px;background:#000;"></div>
<div class="a" style="left:656px;top:398px;width:1px;height:176px;background:#000;"></div>
<div class="a" style="left:461px;top:598px;width:196px;height:1px;background:#000;"></div>
<div class="a" style="left:461px;top:622px;width:196px;height:1px;background:#000;"></div>
<div class="a" style="left:461px;top:623px;width:196px;height:1px;background:#fff;"></div>
<div class="a" style="left:461px;top:624px;width:196px;height:1px;background:#fff;"></div>
<div class="a" style="left:461px;top:625px;width:196px;height:1px;background:#000;"></div>
<div class="a" style="left:461px;top:650px;width:196px;height:1px;background:#000;"></div>
<div class="a" style="left:461px;top:574px;width:1px;height:77px;background:#000;"></div>
<div class="a" style="left:547px;top:574px;width:1px;height:77px;background:#000;"></div>
<div class="a" style="left:656px;top:574px;width:1px;height:77px;background:#000;"></div>
<div class="a" style="left:27px;top:422px;width:631px;height:78px;border:2px solid #217346;"></div>
<div class="a" style="left:29px;top:424px;width:627px;height:74px;border:1px solid #fff;border-left:none;"></div>
<div class="a" style="left:29px;top:424px;width:85px;height:24px;background:#fff;"></div>
<div class="a" style="left:29px;top:448px;width:85px;height:1px;background:#000;"></div>
<span class="t" style="left:464.00px;top:237.00px;font-size:13.4px;color:#000;letter-spacing:.9px;">〒150-0001</span>
<span class="t" style="left:482.30px;top:262.00px;font-size:13.4px;color:#000;letter-spacing:1.27px;clip-path:inset(0 73.5px 0 0);">東京都渋谷区</span>
<span class="t" style="left:486.90px;top:286.00px;font-size:14.67px;color:#000;">TEL</span>
<span class="t" style="left:31.00px;top:287.00px;font-size:13.4px;color:#000;letter-spacing:1.82px;">下記のとおり御見積申し上げます。</span>
<span class="t" style="left:42.30px;top:332.00px;font-size:13.4px;color:#000;letter-spacing:1.67px;font-weight:700;">合計金額</span>
<span class="t" style="left:39.50px;top:356.00px;font-size:13.4px;color:#333;letter-spacing:3.17px;">（税込）</span>
<span class="t" style="left:275.00px;top:340.00px;font-size:27.6px;color:#111;transform:scaleX(0.955);">¥18,036</span>
<span class="t" style="left:42.20px;top:402.00px;font-size:13.4px;color:#000;letter-spacing:1.90px;font-weight:700;">商品番号</span>
<span class="t" style="left:218.70px;top:402.00px;font-size:13.4px;color:#000;letter-spacing:1.60px;font-weight:700;">商 品 名</span>
<span class="t" style="left:403.20px;top:402.00px;font-size:13.4px;color:#000;letter-spacing:0.80px;font-weight:700;">数 量</span>
<span class="t" style="left:488.30px;top:402.00px;font-size:13.4px;color:#000;font-weight:700;letter-spacing:1.2px;">単 価</span>
<span class="t" style="left:31.80px;top:426.00px;font-size:14.67px;color:#000;transform:scaleX(1.023);">A-002</span>
<span class="t" style="left:116.90px;top:426.00px;font-size:13.4px;color:#222;letter-spacing:1.32px;">クラフト封筒 長形4号 100枚セット</span>
<span class="t" style="left:450.31px;top:426.00px;font-size:14.67px;color:#000;transform:scaleX(0.986);">2</span>
<span class="t" style="left:31.15px;top:450.00px;font-size:14.67px;color:#000;transform:scaleX(1.047);">B-003</span>
<span class="t" style="left:115.90px;top:451.00px;font-size:13.4px;color:#222;letter-spacing:1.35px;">リングファイル A4 10冊セット</span>
<span class="t" style="left:450.31px;top:450.00px;font-size:14.67px;color:#000;transform:scaleX(0.986);">5</span>
<span class="t" style="left:30.77px;top:475.00px;font-size:14.67px;color:#000;transform:scaleX(1.029);">C-001</span>
<span class="t" style="left:116.90px;top:476.00px;font-size:13.4px;color:#222;letter-spacing:1.32px;">ファイルボックス A4 10個セット</span>
<span class="t" style="left:450.31px;top:475.00px;font-size:14.67px;color:#000;transform:scaleX(0.986);">3</span>
<span class="t" style="left:489.50px;top:577.00px;font-size:13.4px;color:#000;font-weight:700;letter-spacing:1.2px;">小 計</span>
<span class="t" style="left:478.00px;top:602.00px;font-size:13.4px;color:#000;font-weight:700;letter-spacing:1.2px;">消 費 税</span>
<span class="t" style="left:490.00px;top:629.00px;font-size:13.4px;color:#000;letter-spacing:1.25px;font-weight:700;">合 計</span>
<span class="t" style="left:602.50px;top:627.00px;font-size:14.67px;color:#000;transform:scaleX(0.981);">¥18,036</span>
<div class="a" style="left:1345px;top:210px;width:21px;height:468px;background:#e6e6e6;"></div>
<div class="a" style="left:1348px;top:227px;width:15px;height:437px;background:#d9d9d9;"></div>
<div class="a" style="left:1348px;top:212px;width:15px;height:15px;background:#fff;border:1px solid #ababab;"></div>
<svg class="a" style="left:1352px;top:217px;" width="7" height="4" viewBox="0 0 7 4"><path d="M0 4L3.5 0L7 4Z" fill="#777"/></svg>
<div class="a" style="left:1348px;top:290px;width:15px;height:352px;background:#fff;border:1px solid #ababab;"></div>
<div class="a" style="left:1348px;top:664px;width:15px;height:15px;background:#fff;border:1px solid #ababab;"></div>
<svg class="a" style="left:1352px;top:670px;" width="7" height="4" viewBox="0 0 7 4"><path d="M0 0H7L3.5 4Z" fill="#777"/></svg>
<div class="a" style="left:0px;top:678px;width:1345px;height:1px;background:#a6a6a6;"></div>
<div class="a" style="left:0px;top:679px;width:1366px;height:27px;background:#e6e6e6;"></div>
<div class="a" style="left:0px;top:678px;width:1345px;height:1px;background:#a6a6a6;"></div>
<svg class="a" style="left:26px;top:687px;" width="5" height="8" viewBox="0 0 5 8"><path d="M5 0V8L0 4Z" fill="#c6c6c6"/></svg>
<svg class="a" style="left:55px;top:687px;" width="5" height="8" viewBox="0 0 5 8"><path d="M0 0V8L5 4Z" fill="#c6c6c6"/></svg>
<div class="a" style="left:100px;top:678px;width:64px;height:23px;background:#fff;border-left:1px solid #b5b5b5;border-right:1px solid #b5b5b5;"></div>
<div class="a" style="left:100px;top:701px;width:64px;height:2px;background:#217346;"></div>
<span class="t" style="left:111.44px;top:682.00px;font-size:12.5px;color:#217346;transform:scaleX(1.056);">見積書</span>
<span class="t" style="left:176.46px;top:682.00px;font-size:12px;color:#444;transform:scaleX(1.042);">商品<span style="display:inline-block;width:37.8px;font-size:13.5px;vertical-align:baseline"><span style="display:inline-block;transform:scaleX(0.7);transform-origin:0 50%">カタログ</span></span></span>
<div class="a" style="left:254px;top:682px;width:1px;height:20px;background:#ababab;"></div>
<svg class="a" style="left:287.3px;top:683.5px;" width="17" height="17" viewBox="0 0 17 17"><circle cx="8.5" cy="8.5" r="7.5" fill="none" stroke="#777" stroke-width="1.1"/><path d="M8.5 4.4V12.6M4.4 8.5H12.6" stroke="#666" stroke-width="1.7"/></svg>
<div class="a" style="left:819px;top:687px;width:2px;height:2px;background:#a6a6a6;"></div>
<div class="a" style="left:819px;top:691px;width:2px;height:2px;background:#a6a6a6;"></div>
<div class="a" style="left:819px;top:695px;width:2px;height:2px;background:#a6a6a6;"></div>
<div class="a" style="left:851px;top:685px;width:479px;height:15px;background:#dadada;"></div>
<div class="a" style="left:836px;top:685px;width:15px;height:15px;background:#fff;border:1px solid #ababab;"></div>
<svg class="a" style="left:841px;top:688.5px;" width="4" height="8" viewBox="0 0 4 8"><path d="M4 0V8L0 4Z" fill="#606060"/></svg>
<div class="a" style="left:851px;top:685px;width:444px;height:15px;background:#fff;border:1px solid #ababab;"></div>
<div class="a" style="left:1332px;top:685px;width:15px;height:15px;background:#fff;border:1px solid #ababab;"></div>
<svg class="a" style="left:1338px;top:688.5px;" width="4" height="8" viewBox="0 0 4 8"><path d="M0 0V8L4 4Z" fill="#606060"/></svg>
<div class="a" style="left:0px;top:706px;width:1366px;height:22px;background:#f3f3f3;"></div>
<div class="a" style="left:0px;top:706px;width:1366px;height:1px;background:#cdcdcd;"></div>
<span class="t" style="left:5.99px;top:708.00px;font-size:12px;color:#333;transform:scaleX(1.011);">準備完了</span>
<svg class="a" style="left:75px;top:710px;" width="14" height="13" viewBox="0 0 14 13"><circle cx="3.6" cy="3.4" r="3.2" fill="#555"/><path d="M4.5 3.5H12.5V12.5H.5V6.5" fill="none" stroke="#666"/><path d="M3 7.5H5M7 7.5H9M3 9.5H5M7 9.5H9M10.5 5.5H11.5M10.5 7.5H11.5M10.5 9.5H11.5M3 11H5M7 11H9" stroke="#666" stroke-width="1"/></svg>
<span class="t" style="left:667.43px;top:708.00px;font-size:12px;color:#333;transform:scaleX(1.071);">平均: 2312.222222</span>
<span class="t" style="left:789.90px;top:708.00px;font-size:12px;color:#333;transform:scaleX(1.104);"><span style="display:inline-block;width:34.32px;font-size:13px;vertical-align:baseline"><span style="display:inline-block;transform:scaleX(0.66);transform-origin:0 50%">データの</span></span>個数: 15</span>
<span class="t" style="left:890.43px;top:708.00px;font-size:12px;color:#333;transform:scaleX(1.067);">最大値: 12500</span>
<span class="t" style="left:986.93px;top:708.00px;font-size:12px;color:#333;transform:scaleX(1.071);">合計: 20810</span>
<div class="a" style="left:1074px;top:706px;width:38px;height:22px;background:#c6c6c6;"></div>
<svg class="a" style="left:1086px;top:710px;" width="13" height="13" viewBox="0 0 13 13"><rect x=".5" y=".5" width="12" height="12" fill="none" stroke="#666"/><path d="M.5 4.5H12.5M.5 8.5H12.5M4.5 .5V12.5M8.5 .5V12.5" stroke="#666" fill="none"/></svg>
<svg class="a" style="left:1124px;top:710px;" width="14" height="13" viewBox="0 0 14 13"><rect x=".5" y=".5" width="13" height="12" fill="none" stroke="#666"/><rect x="3.5" y="3.5" width="7" height="7" fill="none" stroke="#666"/><path d="M5 5.5H9M5 7.5H9" stroke="#666"/></svg>
<svg class="a" style="left:1162px;top:710px;" width="14" height="13" viewBox="0 0 14 13"><rect x=".5" y=".5" width="13" height="12" fill="none" stroke="#666"/><path d="M4.5 .5V7.5H.5M9.5 .5V7.5H13.5M4.5 7.5H9.5" fill="none" stroke="#666"/></svg>
<div class="a" style="left:1192px;top:716px;width:7px;height:2px;background:#555;"></div>
<div class="a" style="left:1203px;top:717px;width:100px;height:1px;background:#9a9a9a;"></div>
<div class="a" style="left:1251px;top:711px;width:5px;height:11px;background:#666;"></div>
<div class="a" style="left:1306px;top:716px;width:8px;height:2px;background:#555;"></div>
<div class="a" style="left:1309px;top:713px;width:2px;height:8px;background:#555;"></div>
<span class="t" style="left:1324.90px;top:708.00px;font-size:12px;color:#333;transform:scaleX(1.103);">100%</span>
<div class="a" style="left:498px;top:234px;width:344px;height:388px;background:#f0f0f0;border:1px solid #1883d7;box-shadow:0 4px 18px 2px rgba(0,0,0,.32);"></div>
<div class="a" style="left:499px;top:235px;width:342px;height:30px;background:#fff;"></div>
<span class="t" style="left:506.29px;top:240.00px;font-size:11px;color:#000;transform:scaleX(1.011);">選択<span style="display:inline-block;width:45.5px;font-size:13px;vertical-align:baseline"><span style="display:inline-block;transform:scaleX(0.7);transform-origin:0 50%">オプション</span></span></span>
<span class="t" style="left:769.58px;top:240.00px;font-size:14px;color:#000;transform:scaleX(0.917);">?</span>
<svg class="a" style="left:813px;top:244px;" width="11" height="11" viewBox="0 0 11 11"><path d="M.5.5L10.5 10.5M10.5.5L.5 10.5" stroke="#111" stroke-width="1.1"/></svg>
<span class="t" style="left:503.96px;top:271.00px;font-size:12px;color:#000;transform:scaleX(1.043);">選択</span>
<div class="a" style="left:534px;top:280px;width:301px;height:1px;background:#dcdcdc;"></div>
<svg class="a" style="left:513.7px;top:299.0px;" width="13" height="13" viewBox="0 0 13 13"><circle cx="6.5" cy="6.5" r="6" fill="#fff" stroke="#333" stroke-width="1"/></svg>
<span class="t" style="left:530.02px;top:296.00px;font-size:12px;color:#000;transform:scaleX(0.980);"><span style="display:inline-block;width:35.64px;font-size:13.5px;vertical-align:baseline"><span style="display:inline-block;transform:scaleX(0.66);transform-origin:0 50%">コメント</span></span>(<u>C</u>)</span>
<svg class="a" style="left:513.7px;top:322.0px;" width="13" height="13" viewBox="0 0 13 13"><circle cx="6.5" cy="6.5" r="6" fill="#fff" stroke="#333" stroke-width="1"/><circle cx="6.5" cy="6.5" r="3.4" fill="#333"/></svg>
<span class="t" style="left:529.91px;top:319.00px;font-size:12px;color:#000;transform:scaleX(1.087);">定数(<u>O</u>)</span>
<svg class="a" style="left:513.7px;top:345.0px;" width="13" height="13" viewBox="0 0 13 13"><circle cx="6.5" cy="6.5" r="6" fill="#fff" stroke="#333" stroke-width="1"/></svg>
<span class="t" style="left:529.93px;top:342.00px;font-size:12px;color:#000;transform:scaleX(1.066);">数式(<u>F</u>)</span>
<svg class="a" style="left:513.7px;top:460.0px;" width="13" height="13" viewBox="0 0 13 13"><circle cx="6.5" cy="6.5" r="6" fill="#fff" stroke="#333" stroke-width="1"/></svg>
<span class="t" style="left:529.90px;top:457.00px;font-size:12px;color:#000;transform:scaleX(1.098);">空白<span style="display:inline-block;width:17.82px;font-size:13.5px;vertical-align:baseline"><span style="display:inline-block;transform:scaleX(0.66);transform-origin:0 50%">セル</span></span>(<u>K</u>)</span>
<svg class="a" style="left:513.7px;top:483.0px;" width="13" height="13" viewBox="0 0 13 13"><circle cx="6.5" cy="6.5" r="6" fill="#fff" stroke="#333" stroke-width="1"/></svg>
<span class="t" style="left:529.98px;top:481.00px;font-size:12px;color:#000;transform:scaleX(1.024);"><span style="display:inline-block;width:44.55px;font-size:13.5px;vertical-align:baseline"><span style="display:inline-block;transform:scaleX(0.66);transform-origin:0 50%">アクティブ</span></span> <span style="display:inline-block;width:17.82px;font-size:13.5px;vertical-align:baseline"><span style="display:inline-block;transform:scaleX(0.66);transform-origin:0 50%">セル</span></span>領域(<u>R</u>)</span>
<svg class="a" style="left:513.7px;top:506.0px;" width="13" height="13" viewBox="0 0 13 13"><circle cx="6.5" cy="6.5" r="6" fill="#fff" stroke="#333" stroke-width="1"/></svg>
<span class="t" style="left:529.96px;top:504.00px;font-size:12px;color:#000;transform:scaleX(1.038);"><span style="display:inline-block;width:44.55px;font-size:13.5px;vertical-align:baseline"><span style="display:inline-block;transform:scaleX(0.66);transform-origin:0 50%">アクティブ</span></span> <span style="display:inline-block;width:26.73px;font-size:13.5px;vertical-align:baseline"><span style="display:inline-block;transform:scaleX(0.66);transform-origin:0 50%">セルの</span></span>配列(<u>A</u>)</span>
<svg class="a" style="left:513.7px;top:529.0px;" width="13" height="13" viewBox="0 0 13 13"><circle cx="6.5" cy="6.5" r="6" fill="#fff" stroke="#333" stroke-width="1"/></svg>
<span class="t" style="left:530.00px;top:526.00px;font-size:12px;color:#000;transform:scaleX(1.004);"><span style="display:inline-block;width:53.46px;font-size:13.5px;vertical-align:baseline"><span style="display:inline-block;transform:scaleX(0.66);transform-origin:0 50%">オブジェクト</span></span>(<u>B</u>)</span>
<div class="a" style="left:529px;top:321px;width:1px;height:17px;border-left:1px dotted #333;"></div>
<svg class="a" style="left:532px;top:368.0px;" width="13" height="13" viewBox="0 0 13 13"><rect x=".5" y=".5" width="12" height="12" fill="#fff" stroke="#333"/><path d="M2.6 6.6L5.2 9.2L10.4 3.4" fill="none" stroke="#222" stroke-width="1.2"/></svg>
<span class="t" style="left:548.32px;top:365.00px;font-size:12px;color:#000;transform:scaleX(1.079);">数値(<u>U</u>)</span>
<svg class="a" style="left:532px;top:391.0px;" width="13" height="13" viewBox="0 0 13 13"><rect x=".5" y=".5" width="12" height="12" fill="#fff" stroke="#333"/><path d="M2.6 6.6L5.2 9.2L10.4 3.4" fill="none" stroke="#222" stroke-width="1.2"/></svg>
<span class="t" style="left:548.32px;top:388.00px;font-size:12px;color:#000;transform:scaleX(1.082);">文字(<u>X</u>)</span>
<svg class="a" style="left:532px;top:414.0px;" width="13" height="13" viewBox="0 0 13 13"><rect x=".5" y=".5" width="12" height="12" fill="#fff" stroke="#333"/><path d="M2.6 6.6L5.2 9.2L10.4 3.4" fill="none" stroke="#222" stroke-width="1.2"/></svg>
<span class="t" style="left:548.36px;top:411.00px;font-size:12px;color:#000;transform:scaleX(1.040);">論理値(<u>G</u>)</span>
<svg class="a" style="left:532px;top:437.0px;" width="13" height="13" viewBox="0 0 13 13"><rect x=".5" y=".5" width="12" height="12" fill="#fff" stroke="#333"/><path d="M2.6 6.6L5.2 9.2L10.4 3.4" fill="none" stroke="#222" stroke-width="1.2"/></svg>
<span class="t" style="left:548.37px;top:434.00px;font-size:12px;color:#000;transform:scaleX(1.030);"><span style="display:inline-block;width:26.73px;font-size:13.5px;vertical-align:baseline"><span style="display:inline-block;transform:scaleX(0.66);transform-origin:0 50%">エラー</span></span>値(<u>E</u>)</span>
<svg class="a" style="left:678.7px;top:299.0px;" width="13" height="13" viewBox="0 0 13 13"><circle cx="6.5" cy="6.5" r="6" fill="#fff" stroke="#333" stroke-width="1"/></svg>
<span class="t" style="left:695.59px;top:297.00px;font-size:12px;color:#000;transform:scaleX(1.006);"><span style="display:inline-block;width:44.55px;font-size:13.5px;vertical-align:baseline"><span style="display:inline-block;transform:scaleX(0.66);transform-origin:0 50%">アクティブ</span></span>行<span style="display:inline-block;width:17.82px;font-size:13.5px;vertical-align:baseline"><span style="display:inline-block;transform:scaleX(0.66);transform-origin:0 50%">との</span></span>相違(<u>W</u>)</span>
<svg class="a" style="left:678.7px;top:322.0px;" width="13" height="13" viewBox="0 0 13 13"><circle cx="6.5" cy="6.5" r="6" fill="#fff" stroke="#333" stroke-width="1"/></svg>
<span class="t" style="left:695.60px;top:320.00px;font-size:12px;color:#000;transform:scaleX(0.999);"><span style="display:inline-block;width:44.55px;font-size:13.5px;vertical-align:baseline"><span style="display:inline-block;transform:scaleX(0.66);transform-origin:0 50%">アクティブ</span></span>列<span style="display:inline-block;width:17.82px;font-size:13.5px;vertical-align:baseline"><span style="display:inline-block;transform:scaleX(0.66);transform-origin:0 50%">との</span></span>相違(<u>M</u>)</span>
<svg class="a" style="left:678.7px;top:345.0px;" width="13" height="13" viewBox="0 0 13 13"><circle cx="6.5" cy="6.5" r="6" fill="#fff" stroke="#333" stroke-width="1"/></svg>
<span class="t" style="left:696.60px;top:342.00px;font-size:12px;color:#000;transform:scaleX(1.018);">参照元(<u>P</u>)</span>
<svg class="a" style="left:678.7px;top:368.0px;" width="13" height="13" viewBox="0 0 13 13"><circle cx="6.5" cy="6.5" r="6" fill="#fff" stroke="#333" stroke-width="1"/></svg>
<span class="t" style="left:696.60px;top:365.00px;font-size:12px;color:#000;transform:scaleX(1.031);">参照先(<u>D</u>)</span>
<svg class="a" style="left:678.7px;top:437.0px;" width="13" height="13" viewBox="0 0 13 13"><circle cx="6.5" cy="6.5" r="6" fill="#fff" stroke="#333" stroke-width="1"/></svg>
<span class="t" style="left:695.51px;top:434.00px;font-size:12px;color:#000;transform:scaleX(1.086);">最後<span style="display:inline-block;width:26.73px;font-size:13.5px;vertical-align:baseline"><span style="display:inline-block;transform:scaleX(0.66);transform-origin:0 50%">のセル</span></span>(<u>S</u>)</span>
<svg class="a" style="left:678.7px;top:460.0px;" width="13" height="13" viewBox="0 0 13 13"><circle cx="6.5" cy="6.5" r="6" fill="#fff" stroke="#333" stroke-width="1"/></svg>
<span class="t" style="left:695.51px;top:457.00px;font-size:12px;color:#000;transform:scaleX(1.087);">可視<span style="display:inline-block;width:17.82px;font-size:13.5px;vertical-align:baseline"><span style="display:inline-block;transform:scaleX(0.66);transform-origin:0 50%">セル</span></span>(<u>Y</u>)</span>
<svg class="a" style="left:678.7px;top:483.0px;" width="13" height="13" viewBox="0 0 13 13"><circle cx="6.5" cy="6.5" r="6" fill="#fff" stroke="#333" stroke-width="1"/></svg>
<span class="t" style="left:695.57px;top:480.00px;font-size:12px;color:#000;transform:scaleX(1.035);">条件付<span style="display:inline-block;width:8.91px;font-size:13.5px;vertical-align:baseline"><span style="display:inline-block;transform:scaleX(0.66);transform-origin:0 50%">き</span></span>書式(<u>T</u>)</span>
<svg class="a" style="left:678.7px;top:506.0px;" width="13" height="13" viewBox="0 0 13 13"><circle cx="6.5" cy="6.5" r="6" fill="#fff" stroke="#333" stroke-width="1"/></svg>
<span class="t" style="left:695.55px;top:503.00px;font-size:12px;color:#000;transform:scaleX(1.050);"><span style="display:inline-block;width:35.64px;font-size:13.5px;vertical-align:baseline"><span style="display:inline-block;transform:scaleX(0.66);transform-origin:0 50%">データの</span></span>入力規則(<u>V</u>)</span>
<svg class="a" style="left:696.9px;top:391.0px;" width="13" height="13" viewBox="0 0 13 13"><circle cx="6.5" cy="6.5" r="6" fill="#fff" stroke="#bfbfbf" stroke-width="1"/><circle cx="6.5" cy="6.5" r="3.4" fill="#c9c9c9"/></svg>
<span class="t" style="left:713.22px;top:388.00px;font-size:12px;color:#838383;transform:scaleX(1.178);">1 <span style="display:inline-block;width:44.55px;font-size:13.5px;vertical-align:baseline"><span style="display:inline-block;transform:scaleX(0.66);transform-origin:0 50%">レベルのみ</span></span>(I)</span>
<svg class="a" style="left:696.9px;top:414.0px;" width="13" height="13" viewBox="0 0 13 13"><circle cx="6.5" cy="6.5" r="6" fill="#fff" stroke="#bfbfbf" stroke-width="1"/></svg>
<span class="t" style="left:713.28px;top:411.00px;font-size:12px;color:#838383;transform:scaleX(1.117);"><span style="display:inline-block;width:62.37px;font-size:13.5px;vertical-align:baseline"><span style="display:inline-block;transform:scaleX(0.66);transform-origin:0 50%">すべてのレベル</span></span>(L)</span>
<svg class="a" style="left:696.9px;top:529.0px;" width="13" height="13" viewBox="0 0 13 13"><circle cx="6.5" cy="6.5" r="6" fill="#fff" stroke="#bfbfbf" stroke-width="1"/><circle cx="6.5" cy="6.5" r="3.4" fill="#c9c9c9"/></svg>
<span class="t" style="left:713.27px;top:526.00px;font-size:12px;color:#838383;transform:scaleX(1.128);"><span style="display:inline-block;width:26.73px;font-size:13.5px;vertical-align:baseline"><span style="display:inline-block;transform:scaleX(0.66);transform-origin:0 50%">すべて</span></span>(L)</span>
<svg class="a" style="left:696.9px;top:552.0px;" width="13" height="13" viewBox="0 0 13 13"><circle cx="6.5" cy="6.5" r="6" fill="#fff" stroke="#bfbfbf" stroke-width="1"/></svg>
<span class="t" style="left:713.37px;top:549.00px;font-size:12px;color:#838383;transform:scaleX(1.025);">同<span style="display:inline-block;width:8.91px;font-size:13.5px;vertical-align:baseline"><span style="display:inline-block;transform:scaleX(0.66);transform-origin:0 50%">じ</span></span>入力規則(E)</span>
<div class="a" style="left:679px;top:587px;width:75px;height:25px;background:#e5f1fb;border:1px solid #0078d7;"></div>
<span class="t" style="left:704.50px;top:590.00px;font-size:12px;color:#000;transform:scaleX(1.000);">OK</span>
<div class="a" style="left:760px;top:587px;width:74px;height:25px;background:#e1e1e1;border:1px solid #adadad;"></div>
<span class="t" style="left:771.38px;top:590.00px;font-size:12px;color:#000;transform:scaleX(1.116);"><span style="display:inline-block;width:44.55px;font-size:13.5px;vertical-align:baseline"><span style="display:inline-block;transform:scaleX(0.66);transform-origin:0 50%">キャンセル</span></span></span>
<div class="a" style="left:501px;top:314px;width:81px;height:29.5px;border:6.5px solid #ff0000;border-radius:6px;"></div>
<div class="a" style="left:519px;top:359px;width:98px;height:101px;border:7px solid #ff0000;border-radius:7px;"></div>
<div class="a" style="left:674px;top:583px;width:80px;height:34px;border:7px solid #ff0000;border-radius:6px;"></div>
<svg class="a" style="left:590.6px;top:302.1px;" width="48" height="48" viewBox="0 0 48 48"><circle cx="24" cy="24" r="20" fill="#fff" style="filter:drop-shadow(0 1px 2.5px rgba(0,0,0,.35))"/><circle cx="24" cy="24" r="17.2" fill="none" stroke="#ff0000" stroke-width="1.4"/><circle cx="24" cy="24" r="12.4" fill="none" stroke="#cfcfcf" stroke-width="2.2"/><text x="24" y="34" text-anchor="middle" font-family="Liberation Sans,sans-serif" font-weight="700" font-size="28" fill="#fff" stroke="#fff" stroke-width="4" stroke-linejoin="round">6</text><text x="24" y="34" text-anchor="middle" font-family="Liberation Sans,sans-serif" font-weight="700" font-size="28" fill="#ff0000" stroke="#ff0000" stroke-width=".7">6</text></svg>
<svg class="a" style="left:624px;top:382.7px;" width="48" height="48" viewBox="0 0 48 48"><circle cx="24" cy="24" r="20" fill="#fff" style="filter:drop-shadow(0 1px 2.5px rgba(0,0,0,.35))"/><circle cx="24" cy="24" r="17.2" fill="none" stroke="#ff0000" stroke-width="1.4"/><circle cx="24" cy="24" r="12.4" fill="none" stroke="#cfcfcf" stroke-width="2.2"/><text x="24" y="34" text-anchor="middle" font-family="Liberation Sans,sans-serif" font-weight="700" font-size="28" fill="#fff" stroke="#fff" stroke-width="4" stroke-linejoin="round">7</text><text x="24" y="34" text-anchor="middle" font-family="Liberation Sans,sans-serif" font-weight="700" font-size="28" fill="#ff0000" stroke="#ff0000" stroke-width=".7">7</text></svg>
<svg class="a" style="left:613.7px;top:575.5px;" width="48" height="48" viewBox="0 0 48 48"><circle cx="24" cy="24" r="20" fill="#fff" style="filter:drop-shadow(0 1px 2.5px rgba(0,0,0,.35))"/><circle cx="24" cy="24" r="17.2" fill="none" stroke="#ff0000" stroke-width="1.4"/><circle cx="24" cy="24" r="12.4" fill="none" stroke="#cfcfcf" stroke-width="2.2"/><text x="24" y="34" text-anchor="middle" font-family="Liberation Sans,sans-serif" font-weight="700" font-size="28" fill="#fff" stroke="#fff" stroke-width="4" stroke-linejoin="round">8</text><text x="24" y="34" text-anchor="middle" font-family="Liberation Sans,sans-serif" font-weight="700" font-size="28" fill="#ff0000" stroke="#ff0000" stroke-width=".7">8</text></svg>
</body></html>
